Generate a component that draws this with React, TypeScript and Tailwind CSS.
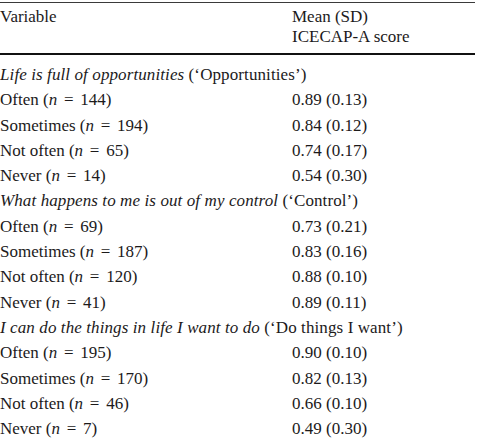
const groups = [
  {
    title: "Life is full of opportunities",
    label: "Opportunities",
    rows: [
      ["Often", "144", "0.89 (0.13)"],
      ["Sometimes", "194", "0.84 (0.12)"],
      ["Not often", "65", "0.74 (0.17)"],
      ["Never", "14", "0.54 (0.30)"],
    ],
  },
  {
    title: "What happens to me is out of my control",
    label: "Control",
    rows: [
      ["Often", "69", "0.73 (0.21)"],
      ["Sometimes", "187", "0.83 (0.16)"],
      ["Not often", "120", "0.88 (0.10)"],
      ["Never", "41", "0.89 (0.11)"],
    ],
  },
  {
    title: "I can do the things in life I want to do",
    label: "Do things I want",
    rows: [
      ["Often", "195", "0.90 (0.10)"],
      ["Sometimes", "170", "0.82 (0.13)"],
      ["Not often", "46", "0.66 (0.10)"],
      ["Never", "7", "0.49 (0.30)"],
    ],
  },
];

export default function App() {
  return (
    <div className="w-[477px] h-[448px] bg-white text-[#1c1a1b] text-[17px] font-['Liberation_Serif','Times_New_Roman',serif] overflow-hidden">
      <div className="mt-[2px] w-[475px] border-t border-[#3a3a3a]">
        <div className="grid grid-cols-[292px_1fr] pt-[4px] pb-[6px] leading-[20px] border-b-2 border-[#111]">
          <div>Variable</div>
          <div>
            <div>Mean (SD)</div>
            <div>ICECAP-A score</div>
          </div>
        </div>
        <div className="pt-[7px] leading-[25.3px]">
          {groups.map((g) => (
            <div key={g.label}>
              <div className="whitespace-nowrap tracking-[0.1px]">
                <i>{g.title}</i> (‘{g.label}’)
              </div>
              {g.rows.map(([name, n, val]) => (
                <div key={name} className="grid grid-cols-[292px_1fr]">
                  <div className="whitespace-nowrap">
                    {name} (<i>n</i> <span className="mx-[2.5px]">=</span> {n})
                  </div>
                  <div>{val}</div>
                </div>
              ))}
            </div>
          ))}
        </div>
      </div>
    </div>
  );
}
